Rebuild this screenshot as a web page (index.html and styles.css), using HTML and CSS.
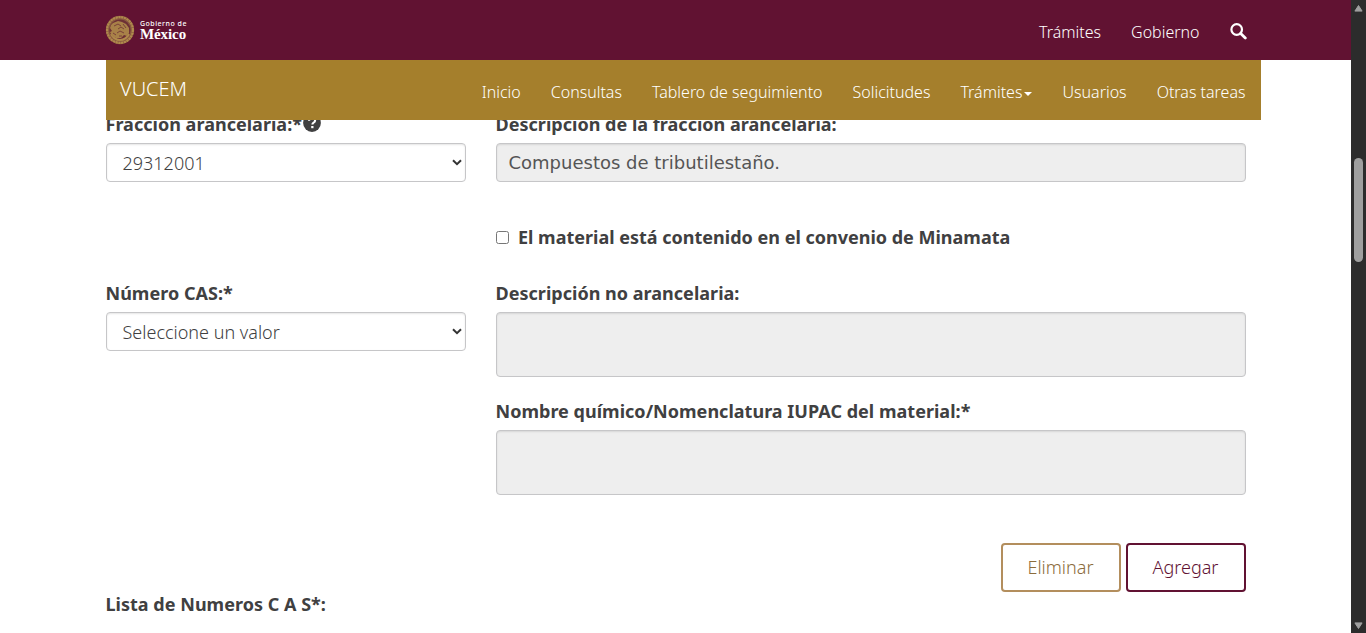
FILE: index.html
```html
<!DOCTYPE html>
<html lang="es">
<head>
<meta charset="utf-8">
<title>VUCEM</title>
<link rel="stylesheet" href="styles.css">
</head>
<body>
<div class="viewport">
  <div class="page">
    <header class="site-header">
      <nav class="gov-bar">
        <div class="container gov-inner">
          <a class="gov-logo">
            <svg class="seal" viewBox="0 0 30 30" aria-hidden="true">
              <circle cx="15" cy="15" r="14.2" fill="#8a5a40"/>
              <circle cx="15" cy="15" r="12.9" fill="none" stroke="#b08a4c" stroke-width="2.2" stroke-dasharray="2.2 .6"/>
              <circle cx="15" cy="15" r="10.6" fill="#6d3035"/>
              <path fill="none" stroke="#b08a4c" stroke-width="2" d="M6 19q3 6 9 6t9-6"/>
              <path fill="#a88148" d="M8 8l5-2 4 1 4 2 3 4 0 5-2 3-3-1-3 3-5 0-4-2-2-4 2-1-2-3 1-3z"/>
              <path fill="none" stroke="#6d3035" stroke-width=".8" d="M9 11l4-2 3 2M13 14l3-2 3 2M12 18l3-2 4 2M18 9l3 4M8 18l3 2M14 21h3"/>
            </svg>
            <span class="gov-name"><span class="gov-small">Gobierno de</span><span class="gov-big">México</span></span>
          </a>
          <div class="gov-links">
            <a>Trámites</a><a>Gobierno</a>
            <svg class="search" viewBox="0 0 17 17" aria-hidden="true"><circle cx="6.7" cy="6.5" r="5.3" fill="none" stroke="#fff" stroke-width="2.2"/><path d="M10.7 10.5l4.6 4.6" stroke="#fff" stroke-width="2.8" stroke-linecap="round"/></svg>
          </div>
        </div>
      </nav>
      <nav class="sub-bar">
        <a class="brand">VUCEM</a>
        <div class="sub-links">
          <a>Inicio</a><a>Consultas</a><a>Tablero de seguimiento</a><a>Solicitudes</a><a class="drop">Trámites<span class="caret"></span></a><a>Usuarios</a><a>Otras tareas</a>
        </div>
      </nav>
    </header>
    <main class="container form">
      <div class="row">
        <div class="field">
          <label class="label">Fracción arancelaria:*<svg class="help" viewBox="0 0 18 18" aria-hidden="true"><circle cx="9" cy="9" r="8.9" fill="#404041"/><path d="M6 6.8q.2-2.8 3.1-2.8t3 2.5q0 1.3-1.5 2.1-1.2.7-1.2 1.9" fill="none" stroke="#fff" stroke-width="2.1"/><path d="M8.2 12h2.3v2.2H8.2z" fill="#fff"/></svg></label>
          <div class="control select"><span>29312001</span><svg class="chevron" viewBox="0 0 10 7" aria-hidden="true"><path d="M1 1.2l4 4 4-4" fill="none" stroke="#333" stroke-width="2"/></svg></div>
        </div>
        <div class="field">
          <label class="label">Descripción de la fracción arancelaria:</label>
          <div class="control readonly">Compuestos de tributilestaño.</div>
        </div>
      </div>
      <div class="row check-row"><span></span>
        <label class="check"><input type="checkbox" class="box"><span>El material está contenido en el convenio de Minamata</span></label>
      </div>
      <div class="row">
        <div class="field">
          <label class="label">Número CAS:*</label>
          <div class="control select"><span>Seleccione un valor</span><svg class="chevron" viewBox="0 0 10 7" aria-hidden="true"><path d="M1 1.2l4 4 4-4" fill="none" stroke="#333" stroke-width="2"/></svg></div>
        </div>
        <div class="stack">
          <div class="field">
            <label class="label">Descripción no arancelaria:</label>
            <div class="control readonly area"></div>
          </div>
          <div class="field">
            <label class="label">Nombre químico/Nomenclatura IUPAC del material:*</label>
            <div class="control readonly area"></div>
          </div>
        </div>
      </div>
      <div class="actions">
        <button class="btn gold">Eliminar</button>
        <button class="btn wine">Agregar</button>
      </div>
      <div class="label">Lista de Numeros C A S*:</div>
    </main>
  </div>
  <div class="scrollbar">
    <svg viewBox="0 0 9 7" class="arrow" aria-hidden="true"><path d="M4.5 .5l3.6 5.6H.9z" fill="#9f9f9f" stroke="#9f9f9f" stroke-linejoin="round"/></svg>
    <div class="thumb"></div>
    <svg viewBox="0 0 9 7" class="arrow down" aria-hidden="true"><path d="M4.5 6.5L.9 .9h7.2z" fill="#9f9f9f" stroke="#9f9f9f" stroke-linejoin="round"/></svg>
  </div>
</div>
</body>
</html>
```
FILE: styles.css
```css
* { box-sizing: border-box; }
body { margin: 0; background: #fff; color: #404041; font: 300 18px/25px "Noto Sans", sans-serif; }
.viewport { display: flex; height: 633px; overflow: hidden; }
.page { position: relative; flex: 1; height: 633px; overflow: hidden; }
.container { width: 1140px; margin-left: 106px; }
.site-header { position: absolute; top: 0; left: 0; right: 0; z-index: 2; color: #fff; font-size: 16px; }
.gov-bar { height: 60px; background: #611232; }
.gov-inner { display: flex; justify-content: space-between; }
.gov-logo { display: flex; align-items: center; height: 59px; gap: 4px; }
.seal { width: 30px; height: 30px; margin-left: -1px; }
.gov-name { display: flex; flex-direction: column; gap: 1px; padding-left: 1px; color: #fff; }
.gov-small { font: 500 7px/7px "Noto Sans", sans-serif; letter-spacing: .5px; }
.gov-big { font: 700 15px/12px "Liberation Serif", serif; letter-spacing: -.1px; }
.gov-links { display: flex; gap: 30px; align-items: center; height: 64px; margin-right: -.5px; white-space: nowrap; }
.search { width: 17px; height: 17px; margin-top: -2px; }
.sub-bar { display: flex; justify-content: space-between; width: 1155px; height: 60px; margin-left: 106px; padding: 0 15.5px 0 14px; background: #a57f2c; }
.brand { font-size: 20px; line-height: 58px; }
.sub-links { display: flex; gap: 30px; line-height: 64px; white-space: nowrap; }
.caret { display: inline-block; margin-left: 2px; vertical-align: middle; border: 4px solid transparent; border-top-color: #fff; border-bottom: 0; }
.form { display: flex; flex-direction: column; padding-top: 112px; }
.row { display: grid; grid-template-columns: 360px 750px; gap: 30px; }
.stack { display: flex; flex-direction: column; gap: 22px; }
.field { display: flex; flex-direction: column; gap: 6px; }
.label, .check { display: flex; align-items: center; height: 25px; font-weight: 700; white-space: nowrap; }
.label { text-indent: -.5px; letter-spacing: .02px; }
.help { width: 18px; height: 18px; margin: -4px 0 0 1px; }
.control { height: 39px; border: 1px solid #c6c6c8; border-radius: 4px; box-shadow: inset 0 1px 2px rgba(0,0,0,.1); display: flex; align-items: center; }
.select { justify-content: space-between; padding: 1px 3px 0 15.5px; }
.chevron { width: 10px; height: 7px; margin-top: -2px; }
.readonly { padding: 0 11.5px; background: #eee; color: #555; font-family: "DejaVu Sans", sans-serif; font-weight: 400; }
.area { height: 65px; }
.check-row { margin: 43px 0 31px; }
.box { width: 13px; height: 13px; margin: 0 9px 0 0; }
.actions { display: flex; justify-content: flex-end; gap: 5px; margin-top: 48px; }
.btn { width: 120px; height: 49px; padding: 0 1px 0 0; border: 2px solid; border-radius: 4px; background: #fff; font: 300 18px/25px "Noto Sans", sans-serif; }
.gold { color: #8b6c3c; border-color: #b38e5d; }
.wine { color: #611232; border-color: #611232; }
.scrollbar { display: flex; flex-direction: column; align-items: center; width: 15px; padding: 5px 0 4px; background: #2c2c2c; }
.arrow { width: 9px; height: 7px; }
.thumb { width: 9px; height: 104px; margin-top: 146px; border-radius: 5px; background: #9f9f9f; }
.down { margin-top: auto; }
```
